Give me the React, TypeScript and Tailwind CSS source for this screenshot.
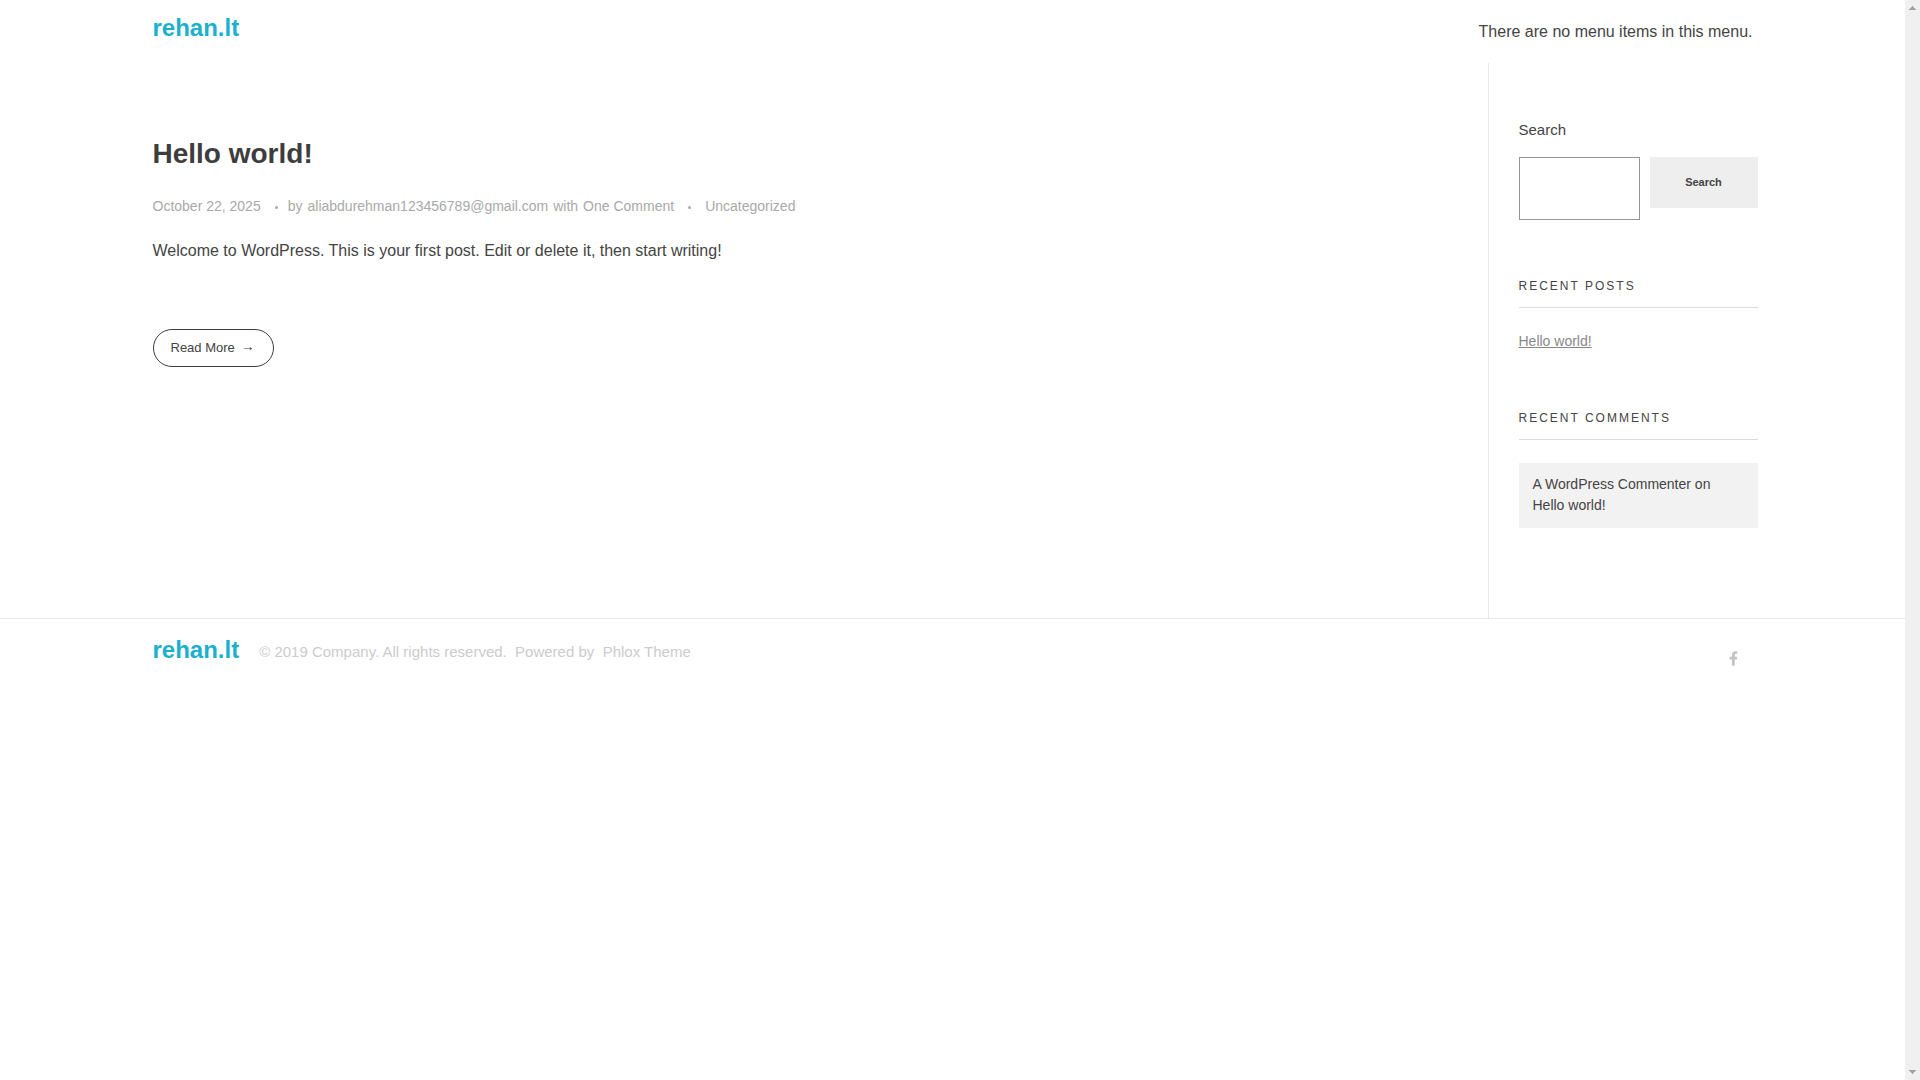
import { FaFacebookF } from "react-icons/fa";

interface iWidget {
  title: string;
  children: React.ReactNode;
}

const Logo = () => {
  return (
    <a href="#" className="text-2xl leading-7 font-bold text-[#1bb0ce]">
      rehan.lt
    </a>
  );
};

const Dot = () => {
  return <span className="mt-0.5 ml-3.5 size-[3px] rounded-full bg-[#a9a9a9]" />;
};

const Widget = ({ title, children }: iWidget) => {
  return (
    <section className="mt-[58px]">
      <h3 className="border-b border-[#dcdcdc] pb-[13px] text-xs leading-4 tracking-[2px] uppercase">
        {title}
      </h3>
      {children}
    </section>
  );
};

const Header = () => {
  return (
    <header className="mx-auto flex h-[63px] w-full max-w-[1612px] items-start justify-between px-[6px]">
      <div className="pt-3.5">
        <Logo />
      </div>
      <p className="pt-5 text-base">There are no menu items in this menu.</p>
    </header>
  );
};

const Post = () => {
  return (
    <article className="flex-1 pt-[73px]">
      <h2 className="text-[28px] leading-9 font-bold text-[#3d3d3d]">
        <a href="#">Hello world!</a>
      </h2>
      <div className="mt-6 flex items-center text-sm text-[#a9a9a9]">
        <a href="#">October 22, 2025</a>
        <Dot />
        <span className="ml-2.5 flex gap-[5px]">
          <span>by</span>
          <a href="#">aliabdurehman123456789@gmail.com</a>
          <span>with</span>
          <a href="#">One Comment</a>
        </span>
        <Dot />
        <a href="#" className="ml-3.5">
          Uncategorized
        </a>
      </div>
      <p className="mt-[23px] text-base">
        Welcome to WordPress. This is your first post. Edit or delete it, then
        start writing!
      </p>
      <a
        href="#"
        className="mt-[66px] inline-flex h-[38px] items-center gap-1.5 rounded-full border border-[#3d3d3d] pr-[18px] pl-[17px] text-[13px]"
      >
        Read More <span className="pb-1 text-sm">→</span>
      </a>
    </article>
  );
};

const Sidebar = () => {
  return (
    <aside className="w-[270px] border-l border-[#e8e8e8] pt-14 pb-[90px] pl-[30px]">
      <form onSubmit={(e) => e.preventDefault()}>
        <label htmlFor="search" className="block text-[15px] leading-[22px]">
          Search
        </label>
        <div className="mt-4 flex items-start gap-2.5">
          <input
            id="search"
            type="search"
            className="h-[63px] w-full min-w-0 flex-1 border border-[#949494] px-3 outline-none"
          />
          <button
            type="submit"
            className="h-[51px] w-[108px] bg-[#eeeeee] text-[11px] font-bold"
          >
            Search
          </button>
        </div>
      </form>
      <Widget title="Recent Posts">
        <a
          href="#"
          className="mt-[23px] mb-[59px] block text-sm text-[#888888] underline"
        >
          Hello world!
        </a>
      </Widget>
      <Widget title="Recent Comments">
        <p className="mt-[23px] bg-[#f2f2f2] px-3.5 pt-[11px] pb-3 text-sm leading-[21px]">
          <a href="#">A WordPress Commenter</a> on <a href="#">Hello world!</a>
        </p>
      </Widget>
    </aside>
  );
};

const Footer = () => {
  return (
    <footer className="border-t border-[#e8e8e8]">
      <div className="mx-auto flex w-full max-w-[1612px] items-start pt-[17px] pr-[21px] pl-[6px]">
        <Logo />
        <p className="ml-5 pt-[5px] text-[15px] leading-[22px] text-[#cccccc]">
          © 2019 Company. All rights reserved.&nbsp; Powered by&nbsp;{" "}
          <a href="#">Phlox Theme</a>
        </p>
        <a
          href="#"
          aria-label="Facebook"
          className="mt-[15px] ml-auto text-[#c4c4c4]"
        >
          <FaFacebookF className="h-[15px] w-[9px]" />
        </a>
      </div>
    </footer>
  );
};

const Scrollbar = () => {
  return (
    <div
      aria-hidden="true"
      className="flex w-[15px] flex-col items-center justify-between bg-[#f0f0f0] pt-1.5 pb-1.5"
    >
      <svg width="7" height="4" viewBox="0 0 7 4" fill="#a3a3a3" shapeRendering="crispEdges">
        <path d="M3 0h1v1h1v1h1v1h1v1H0V3h1V2h1V1h1z" />
      </svg>
      <svg width="7" height="4" viewBox="0 0 7 4" fill="#a3a3a3" shapeRendering="crispEdges">
        <path d="M0 0h7v1H6v1H5v1H4v1H3V3H2V2H1V1H0z" />
      </svg>
    </div>
  );
};

const App = () => {
  return (
    <div className="flex h-screen bg-white font-['Liberation_Sans',Arial,sans-serif] text-[#444444]">
      <div className="min-w-0 flex-1 overflow-hidden">
        <Header />
        <main className="mx-auto flex w-full max-w-[1612px] pr-px pl-[6px]">
          <Post />
          <Sidebar />
        </main>
        <Footer />
      </div>
      <Scrollbar />
    </div>
  );
};

export default App;
